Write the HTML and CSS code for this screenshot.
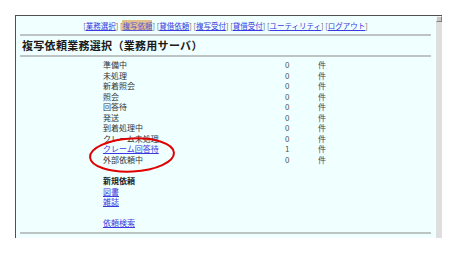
FILE: index.html
```html
<!DOCTYPE html>
<html lang="ja">
<head>
    <meta charset="UTF-8">
    <title>複写依頼業務選択</title>
    <link rel="stylesheet" href="styles.css">
</head>
<body>
    <div class="frame">
        <div class="page">
            <div class="nav">
                [<a href="#">業務選択</a>]
                [<a href="#" class="current">複写依頼</a>]
                [<a href="#">貸借依頼</a>]
                [<a href="#">複写受付</a>]
                [<a href="#">貸借受付</a>]
                [<a href="#">ユーティリティ</a>]
                [<a href="#">ログアウト</a>]
            </div>
            <div class="rule"></div>
            <h1 class="title">複写依頼業務選択（業務用サーバ）</h1>
            <div class="rule"></div>

            <div class="status-list">
                <div class="status-row"><span class="name">準備中</span><span class="count">0</span><span class="unit">件</span></div>
                <div class="status-row"><span class="name">未処理</span><span class="count">0</span><span class="unit">件</span></div>
                <div class="status-row"><span class="name">新着照会</span><span class="count">0</span><span class="unit">件</span></div>
                <div class="status-row"><span class="name">照会</span><span class="count">0</span><span class="unit">件</span></div>
                <div class="status-row"><span class="name">回答待</span><span class="count">0</span><span class="unit">件</span></div>
                <div class="status-row"><span class="name">発送</span><span class="count">0</span><span class="unit">件</span></div>
                <div class="status-row"><span class="name">到着処理中</span><span class="count">0</span><span class="unit">件</span></div>
                <div class="status-row"><span class="name">クレーム未処理</span><span class="count">0</span><span class="unit">件</span></div>
                <div class="status-row"><span class="name"><a href="#">クレーム回答待</a></span><span class="count">1</span><span class="unit">件</span></div>
                <div class="status-row"><span class="name">外部依頼中</span><span class="count">0</span><span class="unit">件</span></div>

                <svg class="mark" width="90" height="38" viewBox="0 0 90 38">
                    <ellipse cx="45" cy="19" rx="42" ry="16.5" fill="none" stroke="#e00000" stroke-width="2" transform="rotate(-3 45 19)"/>
                </svg>
            </div>

            <div class="menu">
                <div class="menu-head">新規依頼</div>
                <div><a href="#">図書</a></div>
                <div><a href="#">雑誌</a></div>
                <div class="menu-gap"></div>
                <div><a href="#">依頼検索</a></div>
            </div>
            <div class="rule"></div>
        </div>
        <div class="scrollbar">
            <div class="scroll-up"></div>
        </div>
    </div>
</body>
</html>
```

FILE: styles.css
```css
body {
    margin: 0;
    background-color: #ffffff;
    font-family: "Noto Sans CJK JP", "Liberation Sans", sans-serif;
    color: #333333;
}
a {
    color: #3a3ae0;
}
.frame {
    display: flex;
    margin: 15px 0 0 15px;
    width: 427px;
    height: 223px;
    border-top: 1px solid #505050;
    border-left: 1px solid #505050;
    box-sizing: border-box;
}
.page {
    flex: 1;
    background-color: #f0ffff;
    padding: 5px 5px 0 4px;
    overflow: hidden;
}
.scrollbar {
    width: 6px;
    background-color: #dedede;
}
.scroll-up {
    height: 6px;
    background-color: #c8c8c8;
    border: 1px solid #f4f4f4;
    border-right-color: #808080;
    border-bottom-color: #808080;
    box-sizing: border-box;
}
.nav {
    text-align: center;
    font-size: 7.5px;
    line-height: 10px;
    color: #666666;
}
.nav .current {
    background-color: #e2c08e;
    color: #5a5ad0;
}
.rule {
    height: 2px;
    background-color: #bcc4c4;
    margin: 3px 0 0 0;
}
.title {
    margin: 2px 0 0 2px;
    font-size: 11px;
    line-height: 14px;
    letter-spacing: 0.3px;
    font-weight: bold;
    color: #1a1a1a;
}
.title + .rule {
    margin-top: 3px;
}
.status-list {
    position: relative;
    margin: 3px 0 0 83px;
}
.status-row {
    display: flex;
    font-size: 8px;
    line-height: 10.5px;
}
.status-row .name {
    width: 182px;
}
.status-row .count {
    width: 33px;
    color: #555555;
}
.status-row .unit {
    color: #444444;
}
.mark {
    position: absolute;
    left: -16px;
    top: 76px;
}
.menu {
    margin: 11px 0 0 83px;
    font-size: 8px;
    line-height: 10.5px;
}
.menu-head {
    font-weight: bold;
    color: #1a1a1a;
}
.menu-gap {
    height: 10.5px;
}
.menu + .rule {
    margin-top: 3px;
}
```
